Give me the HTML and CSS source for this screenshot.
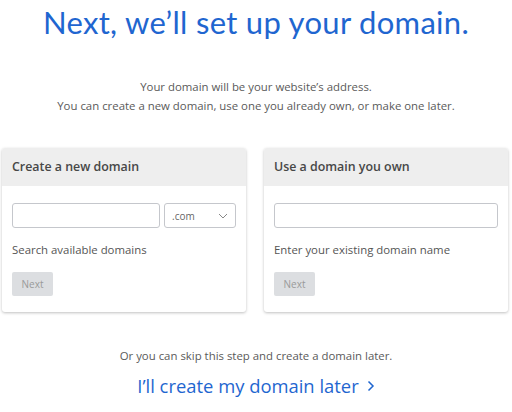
FILE: index.html
```html
<!DOCTYPE html>
<html>
<head>
<meta charset="utf-8">
<link rel="stylesheet" href="styles.css">
</head>
<body>
<div class="page">
  <h1 class="title">Next, we’ll set up your domain.</h1>
  <div class="intro">
    <p>Your domain will be your website’s address.</p>
    <p>You can create a new domain, use one you already own, or make one later.</p>
  </div>
  <div class="cards">
    <section class="card">
      <div class="card-head">Create a new domain</div>
      <div class="card-body">
        <div class="row">
          <div class="input grow"></div>
          <div class="input select"><span>.com</span>
            <svg width="10" height="6" viewBox="0 0 10 6"><path d="M1 1 L5 5 L9 1" fill="none" stroke="#888" stroke-width="1"/></svg>
          </div>
        </div>
        <div class="label">Search available domains</div>
        <div class="btn">Next</div>
      </div>
    </section>
    <section class="card">
      <div class="card-head">Use a domain you own</div>
      <div class="card-body">
        <div class="row">
          <div class="input grow"></div>
        </div>
        <div class="label">Enter your existing domain name</div>
        <div class="btn">Next</div>
      </div>
    </section>
  </div>
  <p class="skip">Or you can skip this step and create a domain later.</p>
  <a class="later" href="#">I’ll create my domain later <svg width="8" height="12" viewBox="0 0 8 12"><path d="M1.5 1.5 L6 6 L1.5 10.5" fill="none" stroke="#1f66d0" stroke-width="1.5"/></svg></a>
</div>
</body>
</html>
```

FILE: styles.css
```css
html, body {
  margin: 0;
  padding: 0;
  background: #fff;
}
body {
  font-family: "Open Sans", "Liberation Sans", sans-serif;
  color: #555;
}
.page {
  width: 512px;
  display: flex;
  flex-direction: column;
  align-items: center;
}
.title {
  margin: 0;
  padding-top: 2px;
  font-family: Lato, "Open Sans", sans-serif;
  font-weight: 400;
  font-size: 31px;
  line-height: 40px;
  color: #1f66d0;
  letter-spacing: 0.3px;
}
.intro {
  margin-top: 35px;
  text-align: center;
  font-size: 11.4px;
  line-height: 19px;
  color: #5a5a5a;
}
.intro p { margin: 0; }
.cards {
  margin-top: 33px;
  margin-right: 2px;
  width: 506px;
  display: flex;
  gap: 18px;
}
.card {
  flex: 1;
  background: #fff;
  border-radius: 3px;
  box-shadow: 0 1px 3px rgba(0,0,0,0.25);
  overflow: hidden;
}
.card-head {
  background: #eeeeee;
  height: 38px;
  line-height: 38px;
  padding-left: 10px;
  font-size: 12.4px;
  font-weight: 600;
  color: #474747;
}
.card-body {
  padding: 17px 10px 16px 10px;
}
.row {
  display: flex;
  gap: 4px;
}
.input {
  height: 23px;
  border: 1px solid #c5c7cc;
  border-radius: 3px;
  background: #fff;
}
.grow { flex: 1; }
.select {
  width: 72px;
  flex: none;
  display: flex;
  align-items: center;
  justify-content: space-between;
  padding: 0 7px 0 7px;
  box-sizing: border-box;
  height: 25px;
  font-size: 10px;
  color: #666;
}
.label {
  margin-top: 13px;
  font-size: 11.4px;
  line-height: 17px;
  color: #555;
}
.btn {
  margin-top: 14px;
  width: 41px;
  height: 24px;
  line-height: 24px;
  text-align: center;
  background: #dcdee1;
  border-radius: 2px;
  font-size: 10px;
  color: #9a9a9a;
}
.skip {
  margin: 35px 0 0 0;
  font-size: 11.4px;
  line-height: 17px;
  color: #5a5a5a;
}
.later {
  margin-top: 10px;
  font-size: 18.4px;
  line-height: 24px;
  color: #1f66d0;
  text-decoration: none;
  display: flex;
  align-items: center;
  gap: 8px;
}
```
